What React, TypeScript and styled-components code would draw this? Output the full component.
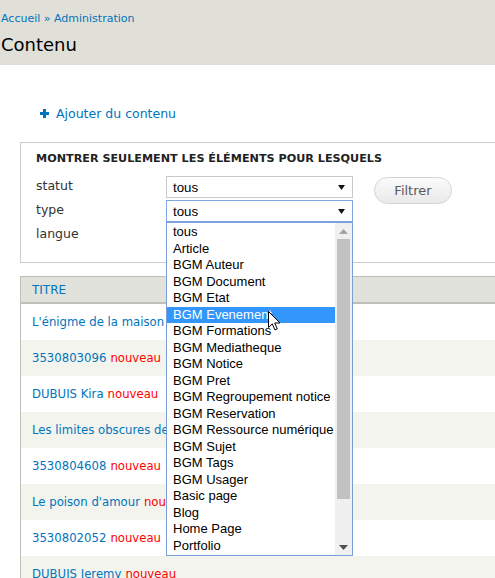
import React from 'react'
import styled, { createGlobalStyle } from 'styled-components'

const GlobalStyle = createGlobalStyle`
    html, body {
        margin: 0;
        padding: 0;
        background: #fff;
        overflow: hidden;
    }
    body {
        font-family: "DejaVu Sans", Verdana, sans-serif;
        color: #333;
    }
`

const link = '#0074bd'

const Page = styled.div`
    width: 495px;
    height: 578px;
    overflow: hidden;
    position: relative;
`

const Header = styled.div`
    background: #e0e0d8;
    height: 65px;
    padding-left: 1px;
    box-sizing: border-box;
    padding-top: 12px;
`

const Breadcrumb = styled.div`
    font-size: 11px;
    line-height: 14px;
    color: ${link};
`

const Title = styled.h1`
    margin: 7px 0 0;
    font-size: 18px;
    line-height: 24px;
    font-weight: normal;
    color: #000;
`

const Main = styled.div`
    padding-left: 20px;
`

const ActionLink = styled.div`
    display: flex;
    align-items: center;
    gap: 7px;
    margin: 40px 0 0 20px;
    height: 16px;
    font-size: 12.5px;
    color: ${link};
`

const Plus = () => (
    <svg width="9" height="9" viewBox="0 0 9 9">
        <path d="M3 0h3v3h3v3H6v3H3V6H0V3h3z" fill={link} />
    </svg>
)

const Fieldset = styled.div`
    margin-top: 21px;
    width: 500px;
    border: 1px solid #ccc;
    box-sizing: border-box;
    height: 121px;
    padding: 9px 0 0 15px;
`

const Legend = styled.div`
    font-size: 11.2px;
    font-weight: bold;
    text-transform: uppercase;
    color: #222;
    line-height: 14px;
    margin-bottom: 10px;
`

const FilterArea = styled.div`
    display: flex;
    gap: 21px;
`

const FormGrid = styled.div`
    display: grid;
    grid-template-columns: 130px 187px;
    grid-auto-rows: 22px;
    row-gap: 2px;
    position: relative;
`

const Label = styled.div`
    font-size: 12.5px;
    line-height: 19px;
    color: #333;
`

const Select = styled.div<{ $focus?: boolean }>`
    box-sizing: border-box;
    height: 22px;
    border: 1px solid ${p => (p.$focus ? '#7da7e0' : '#c9c9c9')};
    background: #fff;
    display: flex;
    align-items: center;
    justify-content: space-between;
    padding: 0 7px 0 6px;
    font-family: "Liberation Sans", Arial, sans-serif;
    font-size: 13.3px;
    color: #000;
`

const Arrow = () => (
    <svg width="7" height="5" viewBox="0 0 7 5">
        <path d="M0 0h7L3.5 5z" fill="#111" />
    </svg>
)

const Button = styled.div`
    box-sizing: border-box;
    margin-top: 1px;
    width: 78px;
    height: 27px;
    border: 1px solid #d4d4d4;
    border-radius: 14px;
    background: linear-gradient(#fbfbfb, #e9e9e9);
    display: flex;
    align-items: center;
    justify-content: center;
    font-size: 13px;
    color: #5a5a5a;
`

const Dropdown = styled.div`
    position: absolute;
    left: 130px;
    top: 46px;
    width: 187px;
    height: 334px;
    box-sizing: border-box;
    border: 1px solid #7a9fd6;
    background: #fff;
    display: flex;
    z-index: 2;
`

const Options = styled.div`
    flex: 1;
    padding-top: 1px;
    font-family: "Liberation Sans", Arial, sans-serif;
    font-size: 13px;
    color: #000;
    position: relative;
`

const Option = styled.div<{ $active?: boolean }>`
    height: 16.5px;
    line-height: 16.5px;
    padding-left: 6px;
    white-space: nowrap;
    background: ${p => (p.$active ? '#3296fa' : 'transparent')};
    color: ${p => (p.$active ? '#fff' : '#000')};
`

const Scrollbar = styled.div`
    width: 17px;
    background: #f0f0f0;
    display: flex;
    flex-direction: column;
    align-items: center;
`

const ScrollArrow = styled.div`
    height: 16px;
    display: flex;
    align-items: center;
    justify-content: center;
`

const Thumb = styled.div`
    width: 13px;
    height: 260px;
    background: #c1c1c1;
`

const Track = styled.div`
    flex: 1;
`

const Cursor = styled.svg`
    position: absolute;
    left: 101px;
    top: 88px;
`

const Table = styled.div`
    margin-top: 13px;
    width: 500px;
    border-left: 1px solid #bebfb9;
    border-top: 1px solid #bebfb9;
`

const HeadRow = styled.div`
    height: 25px;
    background: #e1e2dc;
    border-bottom: 2px solid #bebfb9;
    display: flex;
    align-items: center;
    padding-left: 11px;
    font-size: 12px;
    color: ${link};
`

const Row = styled.div<{ $odd?: boolean }>`
    height: 36px;
    background: ${p => (p.$odd ? '#f3f4ee' : '#fff')};
    display: flex;
    align-items: center;
    padding-left: 11px;
    font-size: 11.7px;
    color: ${link};
    white-space: nowrap;
`

const Marker = styled.span`
    color: #f00;
    margin-left: 4px;
`

const options = [
    'tous',
    'Article',
    'BGM Auteur',
    'BGM Document',
    'BGM Etat',
    'BGM Evenement',
    'BGM Formations',
    'BGM Mediatheque',
    'BGM Notice',
    'BGM Pret',
    'BGM Regroupement notice',
    'BGM Reservation',
    'BGM Ressource numérique',
    'BGM Sujet',
    'BGM Tags',
    'BGM Usager',
    'Basic page',
    'Blog',
    'Home Page',
    'Portfolio',
]

const rows = [
    { title: "L'énigme de la maison", isNew: false },
    { title: '3530803096', isNew: true },
    { title: 'DUBUIS Kira', isNew: true },
    { title: 'Les limites obscures de', isNew: false },
    { title: '3530804608', isNew: true },
    { title: "Le poison d'amour", isNew: true },
    { title: '3530802052', isNew: true },
    { title: 'DUBUIS Jeremy', isNew: true },
]

const App = () => (
    <>
        <GlobalStyle />
        <Page>
            <Header>
                <Breadcrumb>Accueil » Administration</Breadcrumb>
                <Title>Contenu</Title>
            </Header>
            <Main>
                <ActionLink>
                    <Plus />
                    Ajouter du contenu
                </ActionLink>
                <Fieldset>
                    <Legend>Montrer seulement les éléments pour lesquels</Legend>
                    <FilterArea>
                        <FormGrid>
                            <Label>statut</Label>
                            <Select>
                                tous
                                <Arrow />
                            </Select>
                            <Label>type</Label>
                            <Select $focus>
                                tous
                                <Arrow />
                            </Select>
                            <Label>langue</Label>
                            <Dropdown>
                                <Options>
                                    {options.map(o => (
                                        <Option key={o} $active={o === 'BGM Evenement'}>
                                            {o}
                                        </Option>
                                    ))}
                                    <Cursor width="13" height="20" viewBox="0 0 13 20">
                                        <path
                                            d="M0.5 0.5v16l3.8-3.6 2.6 6 2.4-1-2.6-5.9h5.3z"
                                            fill="#fff"
                                            stroke="#000"
                                            strokeWidth="1"
                                        />
                                    </Cursor>
                                </Options>
                                <Scrollbar>
                                    <ScrollArrow>
                                        <svg width="9" height="5" viewBox="0 0 9 5">
                                            <path d="M0 5h9L4.5 0z" fill="#a3a3a3" />
                                        </svg>
                                    </ScrollArrow>
                                    <Thumb />
                                    <Track />
                                    <ScrollArrow>
                                        <svg width="9" height="5" viewBox="0 0 9 5">
                                            <path d="M0 0h9L4.5 5z" fill="#505050" />
                                        </svg>
                                    </ScrollArrow>
                                </Scrollbar>
                            </Dropdown>
                        </FormGrid>
                        <Button>Filtrer</Button>
                    </FilterArea>
                </Fieldset>
                <Table>
                    <HeadRow>TITRE</HeadRow>
                    {rows.map((r, i) => (
                        <Row key={r.title} $odd={i % 2 === 1}>
                            {r.title}
                            {r.isNew && <Marker>nouveau</Marker>}
                        </Row>
                    ))}
                </Table>
            </Main>
        </Page>
    </>
)

export default App
